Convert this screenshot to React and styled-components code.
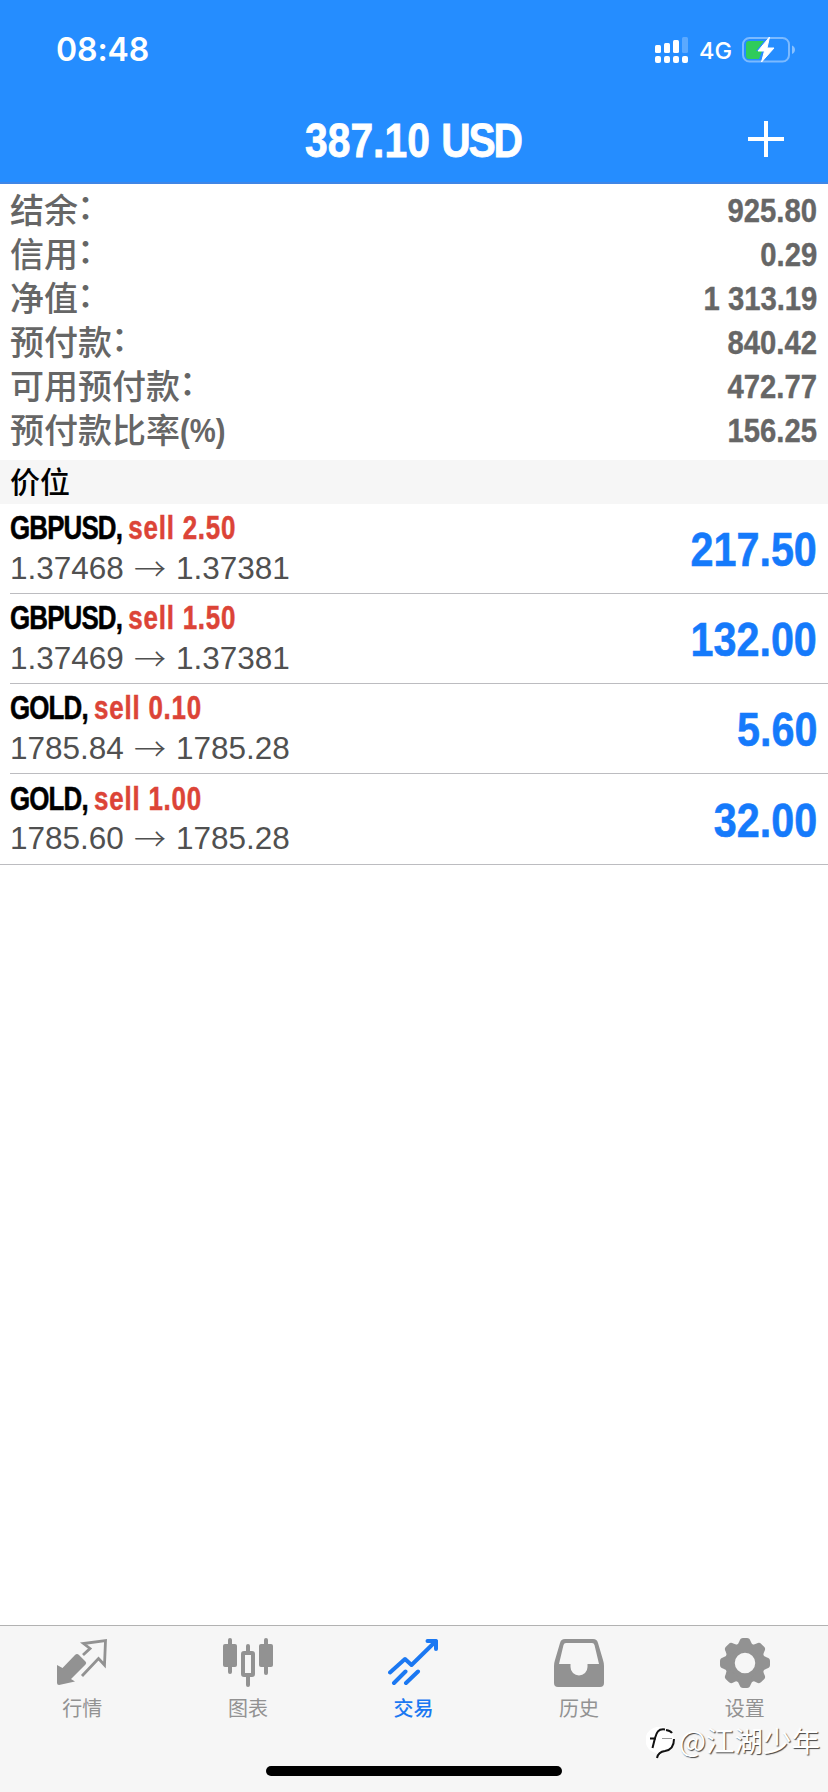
import React from 'react';
import styled, { createGlobalStyle } from 'styled-components';

const GlobalStyle = createGlobalStyle`
  * {
    box-sizing: border-box;
  }

  body {
    margin: 0;
    background: #fff;
    font-family: 'Liberation Sans', 'Noto Sans CJK SC', sans-serif;
  }
`;

const Screen = styled.div`
  display: flex;
  flex-direction: column;
  width: 828px;
  height: 1792px;
  overflow: hidden;
  background: #fff;
`;

const Header = styled.header`
  height: 184px;
  background: #258dff;
  border-bottom: 2px solid #3f86e6;
  color: #fff;
`;

const StatusBar = styled.div`
  display: flex;
  align-items: center;
  height: 100px;
  padding: 0 32px 0 56px;
`;

const Clock = styled.span`
  flex: 1;
  font: 600 32px/40px Inter, sans-serif;
  letter-spacing: -0.1px;
`;

const Network = styled.span`
  margin: 2px 10px 0;
  font: 500 23.5px/30px Inter, sans-serif;
`;

const TitleBar = styled.div`
  display: grid;
  grid-template-columns: 1fr auto 1fr;
  align-items: center;
  height: 82px;
  padding: 0 44px;
`;

// squeezes the bold sans to the proportions of a condensed face
const Condensed = styled.span`
  display: inline-block;
  font-weight: 700;
  white-space: pre;
  transform: scaleX(${props => props.$scale || 0.85});
  transform-origin: ${props => props.$origin || 'left'} center;
`;

const Title = styled(Condensed)`
  margin-right: 3px;
  font-size: 48px;
  line-height: 56px;
  -webkit-text-stroke: 0.8px #fff;
`;

const Currency = styled.span`
  letter-spacing: -2.5px;
`;

const AddButton = styled.button`
  justify-self: end;
  display: flex;
  margin-bottom: 5px;
  padding: 0;
  border: 0;
  background: none;
`;

const Summary = styled.section`
  padding: 4px 11px 8px 10px;
  height: 276px;
`;

const SummaryRow = styled.div`
  display: flex;
  justify-content: space-between;
  align-items: center;
  height: 44px;
  color: #666;
`;

const SummaryLabel = styled.span`
  height: 44px;
  font: 500 34px/42px 'Noto Sans CJK SC', sans-serif;
`;

const Colon = styled.span`
  margin-left: -1px;
  line-height: 0;
  vertical-align: 4px;
`;

const Unit = styled(Condensed)`
  font-family: 'Liberation Sans', sans-serif;
  font-size: 34px;
  vertical-align: 1px;
  line-height: 30px;
`;

const SummaryValue = styled(Condensed)`
  font-size: 34px;
  line-height: 44px;
  -webkit-text-stroke: 0.4px #666;
`;

const SectionTitle = styled.h2`
  margin: 0;
  padding: 0 10px;
  height: 44px;
  background: #f6f6f6;
  color: #000;
  font: 500 30px/41px 'Noto Sans CJK SC', sans-serif;
`;

const Positions = styled.section`
  flex: 1;
`;

const PositionRow = styled.div`
  display: flex;
  justify-content: space-between;
  align-items: center;
  height: ${props => (props.$last ? 91 : 90)}px;
  margin-left: ${props => (props.$last ? 0 : 10)}px;
  padding: 0 11px 0 ${props => (props.$last ? 10 : 0)}px;
  border-bottom: 1px solid #bcbcc0;
`;

const Symbol = styled(Condensed)`
  display: block;
  font-size: 33px;
  line-height: 39px;
  letter-spacing: -1.1px;
  color: #000;
  -webkit-text-stroke: 0.5px;
`;

const Side = styled.span`
  letter-spacing: 1px;
  color: #dc4437;
`;

const Prices = styled.div`
  display: flex;
  align-items: center;
  height: 42px;
  font-size: 31.5px;
  color: #505050;
`;

const Arrow = styled.span`
  width: 32px;
  margin: 0 10px 3px;
  font: 300 32px/40px 'Noto Sans CJK SC', sans-serif;
`;

const Profit = styled(Condensed)`
  padding-top: 3px;
  font-size: 48px;
  line-height: 56px;
  color: #157afb;
  -webkit-text-stroke: 0.6px #157afb;
`;

const Footer = styled.footer`
  position: relative;
  height: 167px;
  border-top: 1px solid #b2b2b2;
  background: #f6f6f6;
`;

const TabBar = styled.nav`
  display: grid;
  grid-template-columns: repeat(5, 1fr);
  height: 140px;
`;

const Tab = styled.a`
  display: flex;
  flex-direction: column;
  align-items: center;
  padding: 12px 1px 0 0;
  color: ${props => (props.$active ? '#1b78f2' : '#929292')};
  font: ${props => (props.$active ? 500 : 400)} 20px/30px 'Noto Sans CJK SC', sans-serif;

  svg {
    margin-bottom: 5px;
  }
`;

const HomeIndicator = styled.div`
  width: 296px;
  height: 10px;
  margin: 0 auto;
  border-radius: 5px;
  background: #000;
`;

const Watermark = styled.div`
  position: absolute;
  right: 8px;
  top: 95px;
  display: flex;
  gap: 2px;
  color: #fff;
  font: 400 28.5px/38px 'Noto Sans CJK SC', sans-serif;
  text-shadow: 1px 1px 1px #444;

  svg {
    margin-top: 6px;
  }
`;

const SignalIcon = () => (
  <svg width="34" height="28" viewBox="0 0 34 28" fill="#fff">
    <rect x="0" y="9" width="6" height="8" rx="1.5" />
    <rect x="9" y="7" width="6" height="10" rx="1.5" />
    <rect x="18" y="4" width="6" height="13" rx="1.5" />
    <rect x="27" y="1" width="6" height="16" rx="1.5" opacity="0.25" />
    <rect x="0" y="20" width="6" height="7" rx="2" />
    <rect x="9" y="20" width="6" height="7" rx="2" />
    <rect x="18" y="20" width="6" height="7" rx="2" />
    <rect x="27" y="20" width="6" height="7" rx="2" />
  </svg>
);

const BatteryIcon = () => (
  <svg width="54" height="28" viewBox="0 0 54 28">
    <rect x="1" y="2" width="46" height="23.5" rx="6.5" fill="none" stroke="#fff" strokeOpacity=".4" strokeWidth="2" />
    <path d="M50 9.5c4 1.5 4 7 0 8.5z" fill="#fff" opacity=".45" />
    <path d="M7 5h15L14 15h6l-3 8H7a3 3 0 0 1-3-3V8a3 3 0 0 1 3-3z" fill="#2fcc5b" />
    <path d="M27.5 1 16 15h6.500L19.500 26 32 12h-7z" fill="#fff" stroke="#fff" strokeLinejoin="round" />
  </svg>
);

const PlusIcon = () => (
  <svg width="36" height="36" viewBox="0 0 36 36" stroke="#fff" strokeWidth="4">
    <path d="M0 18h36M18 0v36" />
  </svg>
);

const QuotesIcon = () => (
  <svg width="50" height="50" viewBox="0 0 50 50">
    <path
      d="M0 27l5.500 3L18 17q2-2 4 0l6.500 6.500q1.500 1.500 0 3L14 41l4 2.500L2 47q-2 0-2-2z"
      fill="currentColor"
    />
    <path
      d="M26 17l7-6.500-6.500-5L48.500 2.500 47.500 27l-6-6.500L25 38"
      fill="none"
      stroke="currentColor"
      strokeWidth="2.8"
    />
  </svg>
);

const ChartIcon = () => (
  <svg width="50" height="50" viewBox="0 0 50 50" fill="currentColor">
    <rect x="5" y="0" width="4" height="36" rx="2" />
    <rect x="0" y="6" width="14" height="23" rx="2" />
    <rect x="41" y="0" width="4" height="37" rx="2" />
    <rect x="36" y="6" width="14" height="23" rx="2" />
    <rect x="23" y="6" width="4" height="9" rx="2" />
    <rect x="23" y="37" width="4" height="12" rx="2" />
    <rect x="20" y="15" width="10" height="22" rx="1" fill="none" stroke="currentColor" strokeWidth="4" />
  </svg>
);

const TradeIcon = () => (
  <svg
    width="50"
    height="50"
    viewBox="0 0 50 50"
    fill="none"
    stroke="currentColor"
    strokeWidth="4"
    strokeLinecap="round"
    strokeLinejoin="round"
  >
    <path d="M2 34.500 17 21l6.500 6L48 3M39.500 3H48v8M6 45l11.500-11.500M18 45l12-11.500" />
  </svg>
);

const HistoryIcon = () => (
  <svg width="50" height="50" viewBox="0 0 50 50" fill="currentColor" fillRule="evenodd">
    <path d="M11 1h28c3 0 4 1 5 4l5 17q1 3 1 6v17q0 4-4 4H4q-4 0-4-4V28q0-3 1-6L6 5c1-3 2-4 5-4zM12 5q-2 0-2.500 2L5 26h11.500v3a8.500 8.500 0 0 0 17 0v-3H45L40.500 7q-.5-2-2.500-2z" />
  </svg>
);

const SettingsIcon = () => (
  <svg width="50" height="50" viewBox="0 0 50 50" fill="currentColor">
    <circle cx="25" cy="25" r="15" fill="none" stroke="currentColor" strokeWidth="9.5" />
    {[0, 45, 90, 135, 180, 225, 270, 315].map(angle => (
      <path
        key={angle}
        d="M15.500 8Q18.500 6.500 19.500 3q.8-3 3.500-3h4q2.700 0 3.500 3 1 3.500 4 5L30 10H20z"
        transform={`rotate(${angle} 25 25)`}
      />
    ))}
  </svg>
);

const WatermarkLogo = () => (
  <svg width="31" height="34" viewBox="0 0 31 34">
    <path d="M14 0a14 14 0 0 1 14 14c0 8-5 11-11 12l-5 5-1-5A13 13 0 0 1 14 0z" fill="#fff" />
    <g fill="none" stroke="#111" strokeWidth="2">
      <path d="M19 2.500c-7-1-8.500 3-10 8.500L6.500 21M4 11.500h6" />
      <path d="M20 3c3 .5 5 1.500 6 3M28 12c0 7-3 11-9 12-4 .5-7 2-8 7" />
      <path d="M16 11.500h10" stroke="#999" strokeWidth="1" />
    </g>
  </svg>
);

const summary = [
  { label: '结余', value: '925.80' },
  { label: '信用', value: '0.29' },
  { label: '净值', value: '1 313.19' },
  { label: '预付款', value: '840.42' },
  { label: '可用预付款', value: '472.77' },
  { label: '预付款比率', unit: '(%)', value: '156.25' },
];

const positions = [
  { symbol: 'GBPUSD', side: 'sell 2.50', open: '1.37468', current: '1.37381', profit: '217.50' },
  { symbol: 'GBPUSD', side: 'sell 1.50', open: '1.37469', current: '1.37381', profit: '132.00' },
  { symbol: 'GOLD', side: 'sell 0.10', open: '1785.84', current: '1785.28', profit: '5.60' },
  { symbol: 'GOLD', side: 'sell 1.00', open: '1785.60', current: '1785.28', profit: '32.00' },
];

const tabs = [
  { label: '行情', Icon: QuotesIcon },
  { label: '图表', Icon: ChartIcon },
  { label: '交易', Icon: TradeIcon, active: true },
  { label: '历史', Icon: HistoryIcon },
  { label: '设置', Icon: SettingsIcon },
];

const App = () => (
  <Screen>
    <GlobalStyle />
    <Header>
      <StatusBar>
        <Clock>08:48</Clock>
        <SignalIcon />
        <Network>4G</Network>
        <BatteryIcon />
      </StatusBar>
      <TitleBar>
        <span />
        <Title $origin="center" $scale={0.85}>
          387.10 <Currency>USD</Currency>
        </Title>
        <AddButton aria-label="add">
          <PlusIcon />
        </AddButton>
      </TitleBar>
    </Header>
    <Summary>
      {summary.map(({ label, unit, value }) => (
        <SummaryRow key={label}>
          <SummaryLabel>
            {label}
            {unit ? <Unit $scale={0.86}>{unit}</Unit> : <Colon>：</Colon>}
          </SummaryLabel>
          <SummaryValue $origin="right" $scale={0.86}>{value}</SummaryValue>
        </SummaryRow>
      ))}
    </Summary>
    <SectionTitle>价位</SectionTitle>
    <Positions>
      {positions.map(({ symbol, side, open, current, profit }, i) => (
        <PositionRow key={open} $last={i === positions.length - 1}>
          <div>
            <Symbol $scale={0.785}>
              {symbol}, <Side>{side}</Side>
            </Symbol>
            <Prices>
              {open}
              <Arrow>→</Arrow>
              {current}
            </Prices>
          </div>
          <Profit $origin="right" $scale={0.86}>{profit}</Profit>
        </PositionRow>
      ))}
    </Positions>
    <Footer>
      <TabBar>
        {tabs.map(({ label, Icon, active }) => (
          <Tab key={label} $active={active}>
            <Icon />
            {label}
          </Tab>
        ))}
      </TabBar>
      <HomeIndicator />
      <Watermark>
        <WatermarkLogo />
        @江湖少年
      </Watermark>
    </Footer>
  </Screen>
);

export default App;
